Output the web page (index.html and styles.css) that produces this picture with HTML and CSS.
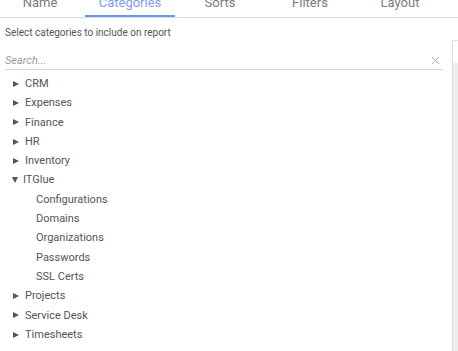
FILE: index.html
```html
<!DOCTYPE html>
<html>
<head>
<meta charset="utf-8">
<link rel="stylesheet" href="styles.css">
</head>
<body>
<div class="page">
  <div class="tabs">
    <div class="tab"><span class="label">Name</span></div>
    <div class="tab active"><span class="label">Categories</span></div>
    <div class="tab"><span class="label">Sorts</span></div>
    <div class="tab"><span class="label">Filters</span></div>
    <div class="tab"><span class="label">Layout</span></div>
  </div>
  <div class="main">
    <div class="content">
      <div class="hint">Select categories to include on report</div>
      <div class="search">
        <span class="placeholder">Search...</span>
        <svg class="clear" width="9" height="9" viewBox="0 0 9 9"><path d="M1 1L8 8M8 1L1 8" stroke="#b5b5b5" stroke-width="1" fill="none"/></svg>
      </div>
      <ul class="tree">
        <li class="node"><span class="caret"></span>CRM</li>
        <li class="node"><span class="caret"></span>Expenses</li>
        <li class="node"><span class="caret"></span>Finance</li>
        <li class="node"><span class="caret"></span>HR</li>
        <li class="node"><span class="caret"></span>Inventory</li>
        <li class="node open"><span class="caret"></span>ITGlue</li>
        <li class="leaf">Configurations</li>
        <li class="leaf">Domains</li>
        <li class="leaf">Organizations</li>
        <li class="leaf">Passwords</li>
        <li class="leaf">SSL Certs</li>
        <li class="node"><span class="caret"></span>Projects</li>
        <li class="node"><span class="caret"></span>Service Desk</li>
        <li class="node"><span class="caret"></span>Timesheets</li>
      </ul>
    </div>
    <div class="side"><div class="side-top"></div><div class="side-track"></div></div>
  </div>
</div>
</body>
</html>
```
FILE: styles.css
```css
html, body { margin: 0; padding: 0; background: #fff; overflow: hidden; }
body { font-family: Roboto, "Noto Sans", sans-serif; color: #555; }
.page { width: 458px; height: 351px; display: flex; flex-direction: column; }
.tabs { display: flex; height: 17px; border-bottom: 1px solid #ddd; }
.tab { width: 90px; height: 17px; flex: none; display: flex; justify-content: center; align-items: flex-start; font-size: 13px; line-height: 13px; color: #7a7a7a; position: relative; }
.tab:first-child { margin-left: -5px; }
.label { margin-top: -4px; }
.tab.active { color: #7e9cf2; }
.tab.active::after { content: ""; position: absolute; left: 0; right: 0; bottom: 0; height: 2px; background: #6d94ec; }
.main { display: flex; flex: 1; }
.content { flex: 1; padding: 0 0 0 5px; }
.hint { font-size: 10px; color: #555; margin-top: 9px; line-height: 12px; }
.search { display: flex; align-items: center; justify-content: space-between; width: 438px; height: 18px; margin-top: 13px; border-bottom: 1px solid #d6d6d6; padding-right: 2px; box-sizing: border-box; }
.placeholder { font-size: 11px; font-style: italic; color: #9a9a9a; }
.clear { margin-right: 1px; }
.tree { list-style: none; margin: 4px 0 0; padding: 0; }
.tree li { height: 19.3px; line-height: 19.3px; font-size: 11px; color: #555; display: flex; align-items: center; }
.node { padding-left: 7px; }
.leaf { padding-left: 31px; }
.caret { width: 0; height: 0; border-top: 3.5px solid transparent; border-bottom: 3.5px solid transparent; border-left: 6px solid #555; margin-right: 6px; margin-left: 1px; }
.node.open .caret { border-left: 3.5px solid transparent; border-right: 3.5px solid transparent; border-top: 6px solid #555; border-bottom: 0; margin-left: 0; margin-right: 5px; }
.side { width: 5px; margin-top: 22px; border-left: 1px solid #ddd; border-top: 1px solid #e5e5e5; display: flex; flex-direction: column; }
.side-top { height: 22px; background: #fff; }
.side-track { flex: 1; background: #eee; }
```
